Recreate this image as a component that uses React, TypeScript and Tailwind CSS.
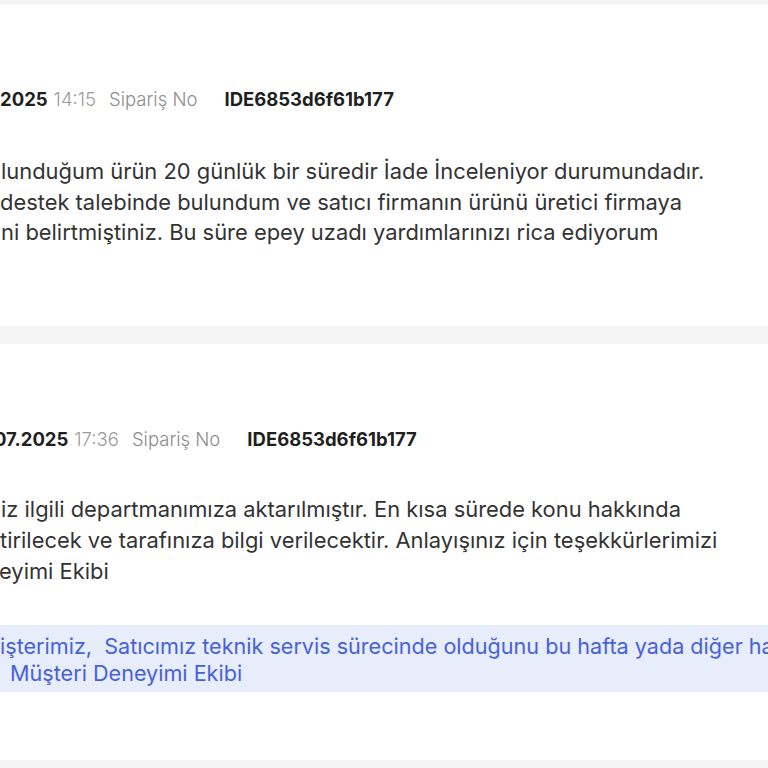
import React from 'react';

const font = { fontFamily: 'Inter, "Noto Sans", sans-serif' };

const MetaRow = ({ date, time, order }: { date: string; time: string; order: string }) => (
  <div className="flex items-baseline whitespace-nowrap text-[18.5px] leading-6">
    <span className="font-bold text-[#1f1f1f]">{date}</span>
    <span className="ml-[6px] text-[#9a9a9a] font-light">{time}</span>
    <span className="ml-[13px] text-[#8d8d8d] font-light">Sipariş No</span>
    <span className="ml-[27px] font-bold text-[#1f1f1f]">{order}</span>
  </div>
);

export default function App() {
  return (
    <div className="h-[768px] w-[768px] overflow-hidden bg-[#f5f5f5] pt-[5px]" style={font}>
      {/* Customer message */}
      <section className="h-[321px] bg-white pt-[82px]">
        <MetaRow date="2025" time="14:15" order="IDE6853d6f61b177" />
        <div className="mt-[45px] whitespace-nowrap text-[21.9px] leading-[30.5px] text-[#333333]">
          <div className="ml-[1px]">lunduğum ürün 20 günlük bir süredir İade İnceleniyor durumundadır.</div>
          <div>destek talebinde bulundum ve satıcı firmanın ürünü üretici firmaya</div>
          <div className="ml-[1px]">ni belirtmiştiniz. Bu süre epey uzadı yardımlarınızı rica ediyorum</div>
        </div>
      </section>

      {/* Support reply */}
      <section className="mt-[18px] h-[416px] bg-white pt-[83px]">
        <div className="-ml-[6px]">
          <MetaRow date="07.2025" time="17:36" order="IDE6853d6f61b177" />
        </div>
        <div className="mt-[43px] whitespace-nowrap text-[21.9px] leading-[31px] text-[#333333]">
          <div className="ml-[1px]">iz ilgili departmanımıza aktarılmıştır. En kısa sürede konu hakkında</div>
          <div>tirilecek ve tarafınıza bilgi verilecektir. Anlayışınız için teşekkürlerimizi</div>
          <div className="-ml-[1px]">eyimi Ekibi</div>
        </div>
        <div className="mt-[38px] whitespace-nowrap bg-[#e8edfc] pt-2 pb-[5px] text-[21.6px] leading-[27px] text-[#4761d6]">
          <div>işterimiz,&nbsp; Satıcımız teknik servis sürecinde olduğunu bu hafta yada diğer hafta</div>
          <div className="ml-[4px]">&nbsp;Müşteri Deneyimi Ekibi</div>
        </div>
      </section>
    </div>
  );
}
